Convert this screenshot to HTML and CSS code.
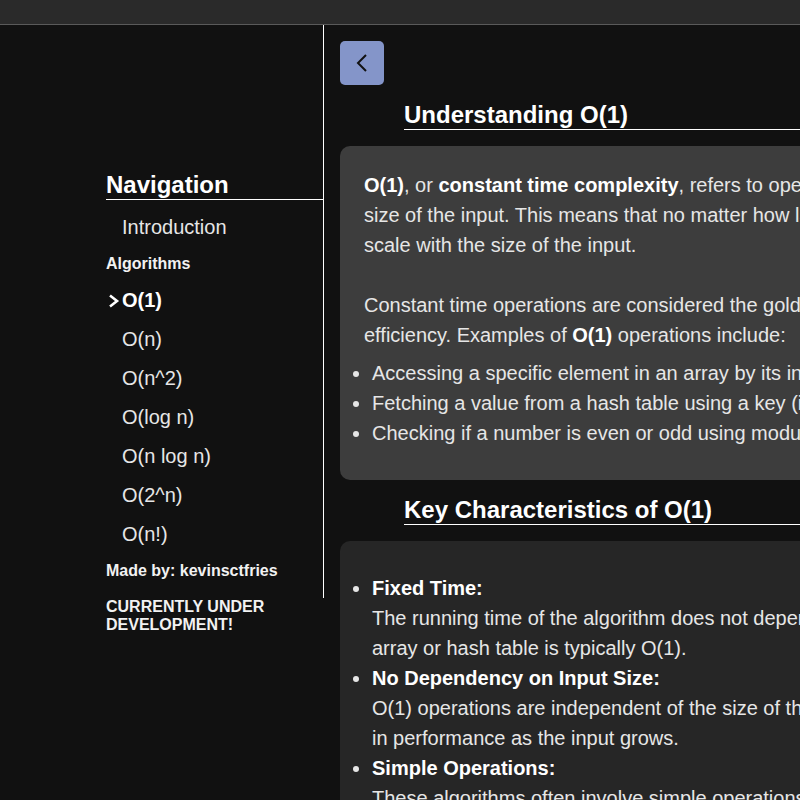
FILE: index.html
```html
<!DOCTYPE html>
<html lang="en">
<head>
<meta charset="utf-8">
<title>Understanding O(1)</title>
<link rel="stylesheet" href="styles.css">
</head>
<body>
<header class="topbar"></header>
<div class="layout">
  <div class="leftcol">
    <aside class="sidebar">
      <nav class="nav">
        <h2 class="nav-title">Navigation</h2>
        <ul class="nav-list">
          <li class="nav-item">Introduction</li>
          <li class="nav-group">Algorithms</li>
          <li class="nav-item active"><svg class="active-chev" width="12" height="14" viewBox="0 0 12 14"><polyline points="2,1.5 9,7 2,12.5" fill="none" stroke="#fff" stroke-width="2.6"/></svg>O(1)</li>
          <li class="nav-item">O(n)</li>
          <li class="nav-item">O(n^2)</li>
          <li class="nav-item">O(log n)</li>
          <li class="nav-item">O(n log n)</li>
          <li class="nav-item">O(2^n)</li>
          <li class="nav-item">O(n!)</li>
          <li class="nav-group">Made by: kevinsctfries</li>
        </ul>
      </nav>
    </aside>
    <p class="dev-note">CURRENTLY UNDER<br>DEVELOPMENT!</p>
  </div>
  <main class="main">
    <button class="back-btn" aria-label="Back"><svg width="12" height="18" viewBox="0 0 12 18"><polyline points="10,1 2,9 10,17" fill="none" stroke="#111" stroke-width="2"/></svg></button>
    <h1 class="section-title">Understanding O(1)</h1>
    <section class="card card-light">
      <p><b>O(1)</b>, or <b>constant time complexity</b>, refers to operations that take the same amount of time regardless of the<br>size of the input. This means that no matter how large the input is, the time it takes to run does not<br>scale with the size of the input.<br><br>Constant time operations are considered the gold standard for algorithm<br>efficiency. Examples of <b>O(1)</b> operations include:</p>
      <ul>
        <li>Accessing a specific element in an array by its index.</li>
        <li>Fetching a value from a hash table using a key (in the average case).</li>
        <li>Checking if a number is even or odd using modulus operation.</li>
      </ul>
    </section>
    <h1 class="section-title">Key Characteristics of O(1)</h1>
    <section class="card card-dark">
      <ul>
        <li><b>Fixed Time:</b><br>The running time of the algorithm does not depend on the input size. For example, accessing an element in an<br>array or hash table is typically O(1).</li>
        <li><b>No Dependency on Input Size:</b><br>O(1) operations are independent of the size of the input data, so there is no decrease<br>in performance as the input grows.</li>
        <li><b>Simple Operations:</b><br>These algorithms often involve simple operations like assignments or lookups.</li>
      </ul>
    </section>
  </main>
</div>
</body>
</html>
```

FILE: styles.css
```css
* { box-sizing: border-box; }
html, body {
  margin: 0;
  padding: 0;
  background: #111111;
  overflow: hidden;
}
body {
  font-family: "Liberation Sans", Arial, sans-serif;
  color: #e6e6e6;
  width: 1300px;
  height: 800px;
}
.topbar {
  height: 25px;
  background: #2a2a2a;
  border-bottom: 1px solid #5a5a5a;
}
.layout {
  display: flex;
  align-items: flex-start;
}
.leftcol {
  width: 324px;
  flex: none;
  display: flex;
  flex-direction: column;
}
.sidebar {
  height: 573px;
  border-right: 1px solid #ffffff;
  padding: 146px 0 0 106px;
}
.nav-title {
  margin: 0;
  font-size: 24px;
  line-height: 28px;
  font-weight: bold;
  color: #ffffff;
  border-bottom: 1px solid #ffffff;
}
.nav-list {
  list-style: none;
  margin: 8px 0 0;
  padding: 0;
}
.nav-item {
  font-size: 20px;
  line-height: 39px;
  padding-left: 16px;
  color: #e6e6e6;
  display: flex;
  align-items: center;
}
.nav-item.active {
  font-weight: bold;
  color: #ffffff;
  padding-top: 1px;
}
.active-chev {
  margin-left: -14px;
  margin-right: 2px;
}
.nav-group {
  font-size: 16px;
  line-height: 33px;
  font-weight: bold;
  color: #f2f2f2;
}
.dev-note {
  margin: 0;
  padding-left: 106px;
  font-size: 16px;
  line-height: 18px;
  font-weight: bold;
  color: #f2f2f2;
}
.main {
  flex: 1;
  padding: 16px 0 0 16px;
}
.back-btn {
  display: flex;
  align-items: center;
  justify-content: center;
  width: 44px;
  height: 44px;
  margin: 0 0 16px;
  padding: 0;
  border: none;
  border-radius: 5px;
  background: #8495c9;
}
.section-title {
  margin: 0 0 16px 64px;
  font-size: 24px;
  line-height: 28px;
  font-weight: bold;
  color: #ffffff;
  border-bottom: 1px solid #ffffff;
}
.card {
  border-radius: 10px;
  padding: 24px;
  margin-bottom: 16px;
  font-size: 20px;
  line-height: 30px;
  white-space: nowrap;
}
.card b { color: #ffffff; }
.card-light { background: #3d3d3d; }
.card-dark { background: #262626; }
.card p { margin: 0; }
.card ul {
  margin: 8px 0;
  padding-left: 8px;
}
```
